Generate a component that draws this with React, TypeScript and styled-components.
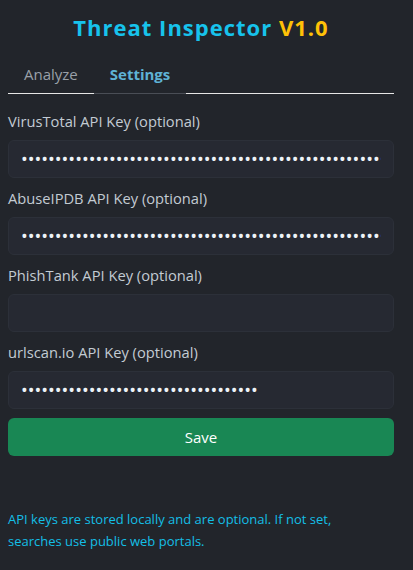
import styled, {createGlobalStyle} from "styled-components";
import {useState} from "react";

const GlobalStyle = createGlobalStyle`
	html, body {
		margin: 0;
		padding: 0;
		background: #22252b;
	}
	body {
		font-family: "Open Sans", "Noto Sans", sans-serif;
		color: #c9d1d9;
	}
`

interface KeyField {
	id: string
	label: string
	value: string
}

const fields: KeyField[] = [
	{id: "vt", label: "VirusTotal API Key (optional)", value: "x".repeat(64)},
	{id: "abuse", label: "AbuseIPDB API Key (optional)", value: "x".repeat(80)},
	{id: "phish", label: "PhishTank API Key (optional)", value: ""},
	{id: "urlscan", label: "urlscan.io API Key (optional)", value: "x".repeat(35)},
]

/**
 * Settings panel of the extension popup
 */
export default function App() {
	const [tab, setTab] = useState("settings")

	return (
		<>
			<GlobalStyle/>
			<Popup>
				<Title>
					Threat Inspector <Version>V1.0</Version>
				</Title>
				<Tabs>
					<Tab $active={tab === "analyze"} onClick={() => setTab("analyze")}>Analyze</Tab>
					<Tab $active={tab === "settings"} onClick={() => setTab("settings")}>Settings</Tab>
				</Tabs>
				<Form onSubmit={e => e.preventDefault()}>
					{fields.map(f => (
						<Field key={f.id}>
							<Label htmlFor={f.id}>{f.label}</Label>
							<Input id={f.id} type="password" defaultValue={f.value}/>
						</Field>
					))}
					<SaveButton type="submit">Save</SaveButton>
				</Form>
				<Note>
					API keys are stored locally and are optional. If not set, searches use public web portals.
				</Note>
			</Popup>
		</>
	)
}

const Popup = styled.div`
	width: 413px;
	min-height: 570px;
	box-sizing: border-box;
	padding: 8px 19px 8px 8px;
`

const Title = styled.h1`
	margin: 4px 0 18px;
	text-align: center;
	font-size: 22px;
	font-weight: 700;
	letter-spacing: 1px;
	color: #17c3ec;
	line-height: 30px;
`

const Version = styled.span`
	color: #ffc107;
`

const Tabs = styled.div`
	display: flex;
	border-bottom: 1px solid #e6e6e6;
`

const Tab = styled.button<{ $active?: boolean }>`
	background: none;
	border: none;
	margin-bottom: -1px;
	padding: 4px 16px 9px;
	font-family: inherit;
	font-size: 15px;
	cursor: pointer;
	font-weight: ${p => p.$active ? 700 : 400};
	color: ${p => p.$active ? "#5fb3d6" : "#9aa0a8"};
	border-bottom: 1px solid ${p => p.$active ? "#4a4e56" : "transparent"};
`

const Form = styled.form`
	display: flex;
	flex-direction: column;
	padding-top: 16px;
`

const Field = styled.div`
	display: flex;
	flex-direction: column;
	margin-bottom: 9px;
`

const Label = styled.label`
	font-size: 14.7px;
	line-height: 22px;
	margin-bottom: 8px;
	color: #c3cbd3;
`

const Input = styled.input`
	height: 38px;
	box-sizing: border-box;
	padding: 0 12px;
	border: 1px solid #2c3039;
	border-radius: 6px;
	background: #262932;
	color: #eef3f8;
	font-family: inherit;
	font-size: 18px;
	outline: none;
`

const SaveButton = styled.button`
	height: 38px;
	border: none;
	border-radius: 6px;
	background: #198754;
	color: #fff;
	font-family: inherit;
	font-size: 15px;
	cursor: pointer;
`

const Note = styled.p`
	margin: 52px 0 0;
	font-size: 13px;
	line-height: 22px;
	color: #14bfe6;
	max-width: 340px;
`
